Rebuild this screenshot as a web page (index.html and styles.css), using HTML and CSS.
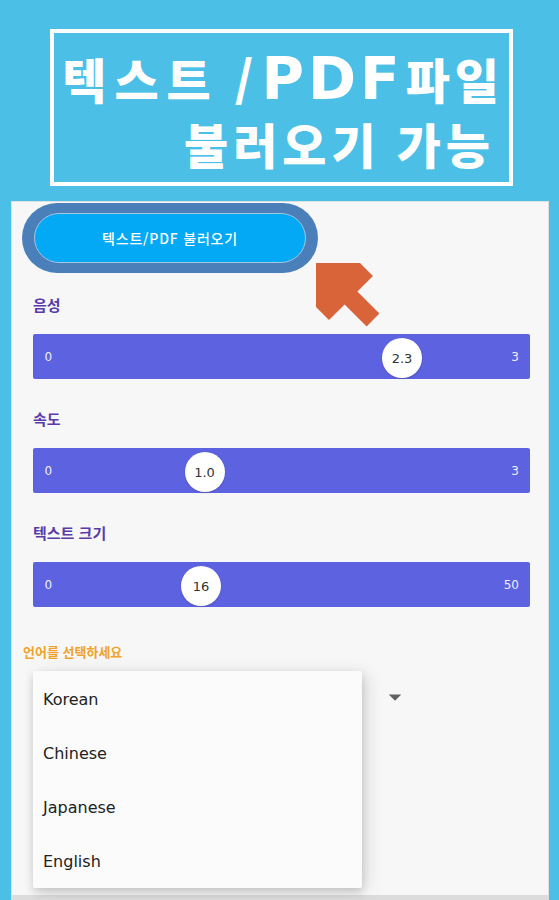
FILE: index.html
```html
<!DOCTYPE html>
<html lang="ko">
<head>
<meta charset="utf-8">
<title>텍스트 / PDF 파일 불러오기</title>
<link rel="stylesheet" href="styles.css">
</head>
<body>
<header class="hero">
  <div class="hero-box">
    <p class="hero-line"><span class="hangul wide">텍스트</span><span class="slash">/</span><span class="latin">PDF</span><span class="hangul after-latin">파일</span></p>
    <p class="hero-line second"><span class="hangul">불러오기</span><span class="hangul w2">가능</span></p>
  </div>
</header>
<main class="panel">
  <div class="load-ring"><button class="load-btn" type="button">텍스트/PDF 불러오기</button></div>
  <svg class="pointer" width="70" height="70" viewBox="0 0 70 70" aria-hidden="true">
    <polygon points="1,1 45,1 58,14 42.4,29.6 64.4,51.6 51.6,64.4 29.6,42.4 14,58 1,45" fill="#d9643a"/>
  </svg>

  <section class="field">
    <h2 class="field-label">음성</h2>
    <div class="slider"><span>0</span><span>3</span><div class="thumb" style="left:349px">2.3</div></div>
  </section>
  <section class="field">
    <h2 class="field-label">속도</h2>
    <div class="slider"><span>0</span><span>3</span><div class="thumb" style="left:151.5px">1.0</div></div>
  </section>
  <section class="field">
    <h2 class="field-label">텍스트 크기</h2>
    <div class="slider"><span>0</span><span>50</span><div class="thumb" style="left:148px">16</div></div>
  </section>

  <p class="lang-label">언어를 선택하세요</p>
  <div class="dropdown">
    <div class="dropdown-btn">
      <svg class="drop-arrow" width="30" height="30" viewBox="0 0 24 24" aria-hidden="true"><path d="M7 10l5 5 5-5z" fill="#616161"/></svg>
    </div>
    <ul class="menu">
      <li>Korean</li>
      <li>Chinese</li>
      <li>Japanese</li>
      <li>English</li>
    </ul>
  </div>
</main>
</body>
</html>
```
FILE: styles.css
```css
html, body {
  margin: 0;
  padding: 0;
}
body {
  width: 559px;
  height: 900px;
  background: #4cbfe7;
  display: flex;
  flex-direction: column;
  overflow: hidden;
  font-family: "Noto Sans CJK KR", "Noto Sans", sans-serif;
}

/* ---------- hero ---------- */
.hero {
  padding: 29px 0 0 50px;
}
.hero-box {
  width: 463px;
  height: 157px;
  box-sizing: border-box;
  border: 4px solid #ffffff;
  padding: 13px 5px 0 0;
}
.hero-line {
  margin: 0;
  display: flex;
  justify-content: flex-end;
  align-items: baseline;
  font: 900 48px/64px "Noto Sans CJK KR", sans-serif;
  color: #ffffff;
}
.hero-line.second {
  padding-right: 9px;
}
.hangul {
  letter-spacing: 5px;
}
.hangul.wide {
  letter-spacing: 8px;
}
.slash {
  margin-left: 16px;
}
.latin {
  font-family: "DejaVu Sans", sans-serif;
  font-weight: 700;
  font-size: 58px;
  letter-spacing: 4px;
  margin-left: 8px;
}
.after-latin {
  margin-left: 2px;
}
.w2 {
  margin-left: 16px;
}

/* ---------- panel ---------- */
.panel {
  position: relative;
  flex: 1;
  margin: 15px 10px 0 11px;
  background: #f7f7f7;
  border: 1px solid #e0e0e0;
  border-bottom: 5px solid #dcdcdc;
  padding: 0 18px 0 21px;
}

.load-ring {
  margin: 1px 0 0 -11px;
  width: 296px;
  height: 70px;
  box-sizing: border-box;
  padding: 10px 12px;
  background: #4a7fb9;
  border-radius: 35px;
}
.load-btn {
  display: block;
  width: 100%;
  height: 100%;
  border: 1px solid #a9c4dd;
  border-radius: 25px;
  background: #03a9f4;
  color: #ffffff;
  font: 500 14px "Noto Sans CJK KR", sans-serif;
  letter-spacing: 0.8px;
  padding: 0;
}

.pointer {
  position: absolute;
  left: 303px;
  top: 60px;
}

/* ---------- sliders ---------- */
.field {
  margin-top: 22px;
}
.field + .field {
  margin-top: 30px;
}
.field-label {
  margin: 0;
  font: 700 15px/20px "Noto Sans CJK KR", sans-serif;
  color: #5a3ba8;
}
.slider {
  position: relative;
  margin-top: 19px;
  height: 45px;
  background: #5d62e0;
  border-radius: 2px;
  display: flex;
  justify-content: space-between;
  align-items: center;
  padding: 0 11px 0 11.5px;
  color: #eef0ff;
  font: 12px "DejaVu Sans", sans-serif;
}
.thumb {
  position: absolute;
  top: 4px;
  width: 40px;
  height: 40px;
  border-radius: 50%;
  background: #ffffff;
  display: flex;
  align-items: center;
  justify-content: center;
  color: #333333;
  font: 13px "DejaVu Sans", sans-serif;
  box-shadow: 0 1px 2px rgba(0, 0, 0, 0.15);
}

/* ---------- language ---------- */
.lang-label {
  margin: 36px 0 0 -10px;
  font: 700 13px/18px "Noto Sans CJK KR", sans-serif;
  color: #f0a22e;
}
.dropdown {
  position: relative;
  margin-top: 16px;
  width: 377px;
  height: 40px;
}
.dropdown-btn {
  height: 40px;
  display: flex;
  justify-content: flex-end;
  align-items: center;
}
.menu {
  position: absolute;
  left: 0;
  top: -6px;
  width: 329px;
  height: 217px;
  box-sizing: border-box;
  margin: 0;
  padding: 1px 0 0 0;
  list-style: none;
  background: #fbfbfb;
  border-radius: 2px;
  box-shadow: 0 4px 8px rgba(0, 0, 0, 0.16), 6px 2px 18px rgba(0, 0, 0, 0.10);
}
.menu li {
  height: 54px;
  display: flex;
  align-items: center;
  padding-left: 10px;
  font: 16px "DejaVu Sans", sans-serif;
  color: #222222;
}
```
